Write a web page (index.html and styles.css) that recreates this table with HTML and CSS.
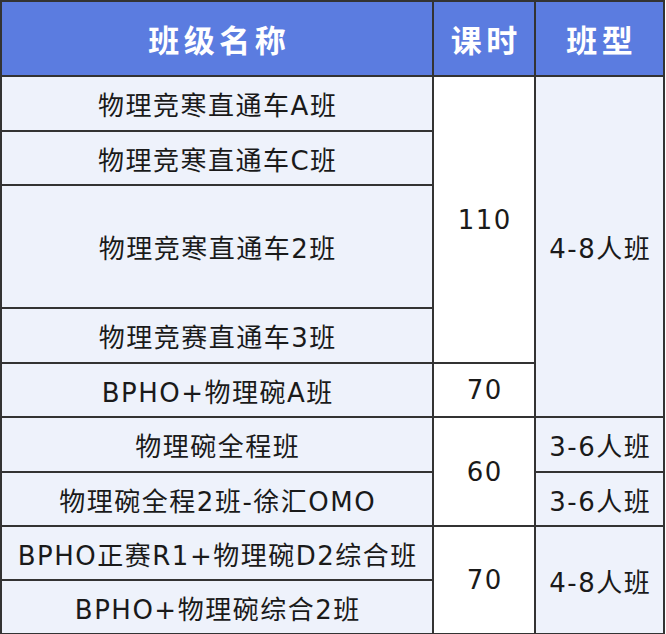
FILE: index.html
```html
<!DOCTYPE html>
<html lang="zh-CN">
<head>
<meta charset="utf-8">
<title>班级列表</title>
<link rel="stylesheet" href="styles.css">
</head>
<body>
<div class="table">
  <div class="cell head c1">班级名称</div>
  <div class="cell head c2">课时</div>
  <div class="cell head c3">班型</div>

  <div class="cell name r1">物理竞寒直通车A班</div>
  <div class="cell hours r1 s4">110</div>
  <div class="cell type r1 s5">4-8人班</div>

  <div class="cell name r2">物理竞寒直通车C班</div>

  <div class="cell name r3">物理竞寒直通车2班</div>

  <div class="cell name r4">物理竞赛直通车3班</div>

  <div class="cell name r5">BPHO+物理碗A班</div>
  <div class="cell hours r5">70</div>

  <div class="cell name r6">物理碗全程班</div>
  <div class="cell hours r6 s2">60</div>
  <div class="cell type r6">3-6人班</div>

  <div class="cell name r7">物理碗全程2班-徐汇OMO</div>
  <div class="cell type r7">3-6人班</div>

  <div class="cell name r8">BPHO正赛R1+物理碗D2综合班</div>
  <div class="cell hours r8 s2">70</div>
  <div class="cell type r8 s2">4-8人班</div>

  <div class="cell name r9">BPHO+物理碗综合2班</div>
</div>
</body>
</html>
```

FILE: styles.css
```css
html, body {
  margin: 0;
  padding: 0;
  background: #ffffff;
}

.table {
  display: grid;
  grid-template-columns: 432px 102px 129px;
  grid-template-rows: 75px 55px 54px 123px 55px 54px 55px 54px 54px 54px;
  border-top: 2px solid #333;
  border-left: 2px solid #333;
  width: max-content;
  font-family: "DejaVu Sans", "Noto Sans CJK SC", sans-serif;
  color: #1a1a1a;
}

.cell {
  box-sizing: border-box;
  border-right: 2px solid #333;
  border-bottom: 2px solid #333;
  display: flex;
  align-items: center;
  justify-content: center;
  font-size: 26px;
  letter-spacing: 1.5px;
  white-space: nowrap;
  background: #eef2fb;
  padding-left: 1.5px;
}

.head {
  grid-row: 1;
  background: #5b7ce0;
  color: #ffffff;
  font-family: "Noto Sans CJK SC", sans-serif;
  font-weight: 700;
  font-size: 31px;
  letter-spacing: 4.5px;
  padding-left: 4.5px;
}

.c1 { grid-column: 1; }
.c2 { grid-column: 2; }
.c3 { grid-column: 3; }

.name { grid-column: 1; }
.hours { grid-column: 2; background: #ffffff; }
.type { grid-column: 3; }

.r1 { grid-row-start: 2; }
.r2 { grid-row-start: 3; }
.r3 { grid-row-start: 4; }
.r4 { grid-row-start: 5; }
.r5 { grid-row-start: 6; }
.r6 { grid-row-start: 7; }
.r7 { grid-row-start: 8; }
.r8 { grid-row-start: 9; }
.r9 { grid-row-start: 10; }

.s2 { grid-row-end: span 2; }
.s4 { grid-row-end: span 4; }
.s5 { grid-row-end: span 5; }
```
